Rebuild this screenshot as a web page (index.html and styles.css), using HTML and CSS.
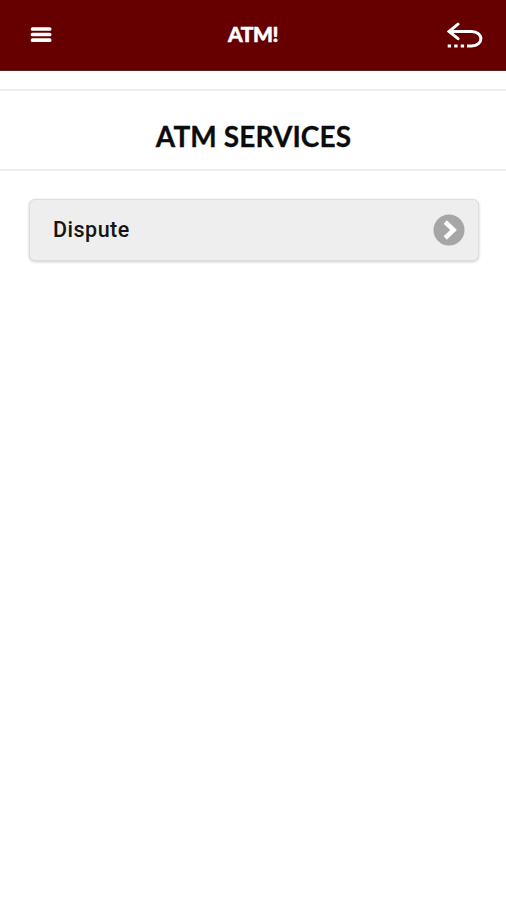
FILE: index.html
```
<!DOCTYPE html>
<html lang="en">
  <head>
    <meta charset="UTF-8" />
    <meta name="viewport" content="width=device-width, initial-scale=1.0" />
    <title>ATM!</title>
    <link rel="stylesheet" href="styles.css">
  </head>
  <body>
    <header class="header">
      <button class="icon-button" aria-label="Menu">
        <svg width="22" height="18" viewBox="0 0 22 18">
          <path d="M2.5 3h17.2M2.5 8.5h17.2M2.5 14.2h17.2" stroke="#fff" stroke-width="3.7" stroke-linecap="round" />
        </svg>
      </button>
      <h1>ATM!</h1>
      <button class="icon-button" aria-label="Back">
        <svg width="36" height="27" viewBox="0 0 36 27" fill="none" stroke="#fff" stroke-width="3">
          <path d="M11 2.2L2 9.5L11 16.7" stroke-linecap="round" />
          <path d="M2 9.5H24.5C37 9.5 37 24 24.5 24H20" />
          <path d="M.7 24h3.4M7.2 24h3.4M13.7 24h3.4" />
        </svg>
      </button>
    </header>

    <div class="title-bar">
      <h2>ATM SERVICES</h2>
    </div>

    <main class="services">
      <a class="service">
        Dispute
        <svg class="arrow" width="32" height="32" viewBox="0 0 32 32">
          <circle cx="16" cy="16" r="15.5" fill="#a6a6a6" />
          <path d="M12.2 8L20.6 16L12.2 24" fill="none" stroke="#fff" stroke-width="4.6" />
        </svg>
      </a>
    </main>
  </body>
</html>
```

FILE: styles.css
```
* {
  box-sizing: border-box;
  margin: 0;
  padding: 0;
}
body {
  min-height: 100vh;
  background-color: #fff;
  font-family: Roboto, Arial, sans-serif;
}

.header {
  display: grid;
  grid-template-columns: 80px 1fr 80px;
  align-items: center;
  height: 71px;
  padding: 0 23px 0 30px;
  background-color: #660000;
  border-bottom: 1px solid #5c2020;
}

.header h1 {
  padding-right: 7px;
  padding-bottom: 2px;
  color: #fff;
  font-family: Lato, sans-serif;
  font-size: 21px;
  font-weight: 900;
  line-height: 26px;
  letter-spacing: -0.5px;
  text-align: center;
  -webkit-text-stroke: 0.5px #fff;
}

.icon-button {
  display: flex;
  background: none;
  border: none;
  cursor: pointer;
}

.icon-button:last-child {
  justify-content: flex-end;
}

.title-bar {
  display: flex;
  justify-content: center;
  align-items: center;
  height: 82px;
  margin-top: 18px;
  padding-top: 11px;
  padding-left: 1px;
  border-top: 2px solid #eee;
  border-bottom: 2px solid #eee;
}

.title-bar h2 {
  color: #0c0c0c;
  font-family: Lato, sans-serif;
  font-size: 28px;
  font-weight: 700;
  letter-spacing: 0.1px;
  -webkit-text-stroke: 0.3px #0c0c0c;
}

.services {
  padding: 28px 27px 0 29px;
}

.service {
  display: flex;
  justify-content: space-between;
  align-items: center;
  height: 62px;
  padding: 0 13px 2px 23px;
  background-color: #eee;
  border: 1px solid #ddd;
  border-radius: 6px;
  box-shadow: 0 1px 3px rgba(0, 0, 0, 0.2);
  color: #151515;
  font-size: 21.5px;
  font-weight: 500;
  letter-spacing: 0.5px;
}

.arrow {
  margin-top: 2px;
}
```
